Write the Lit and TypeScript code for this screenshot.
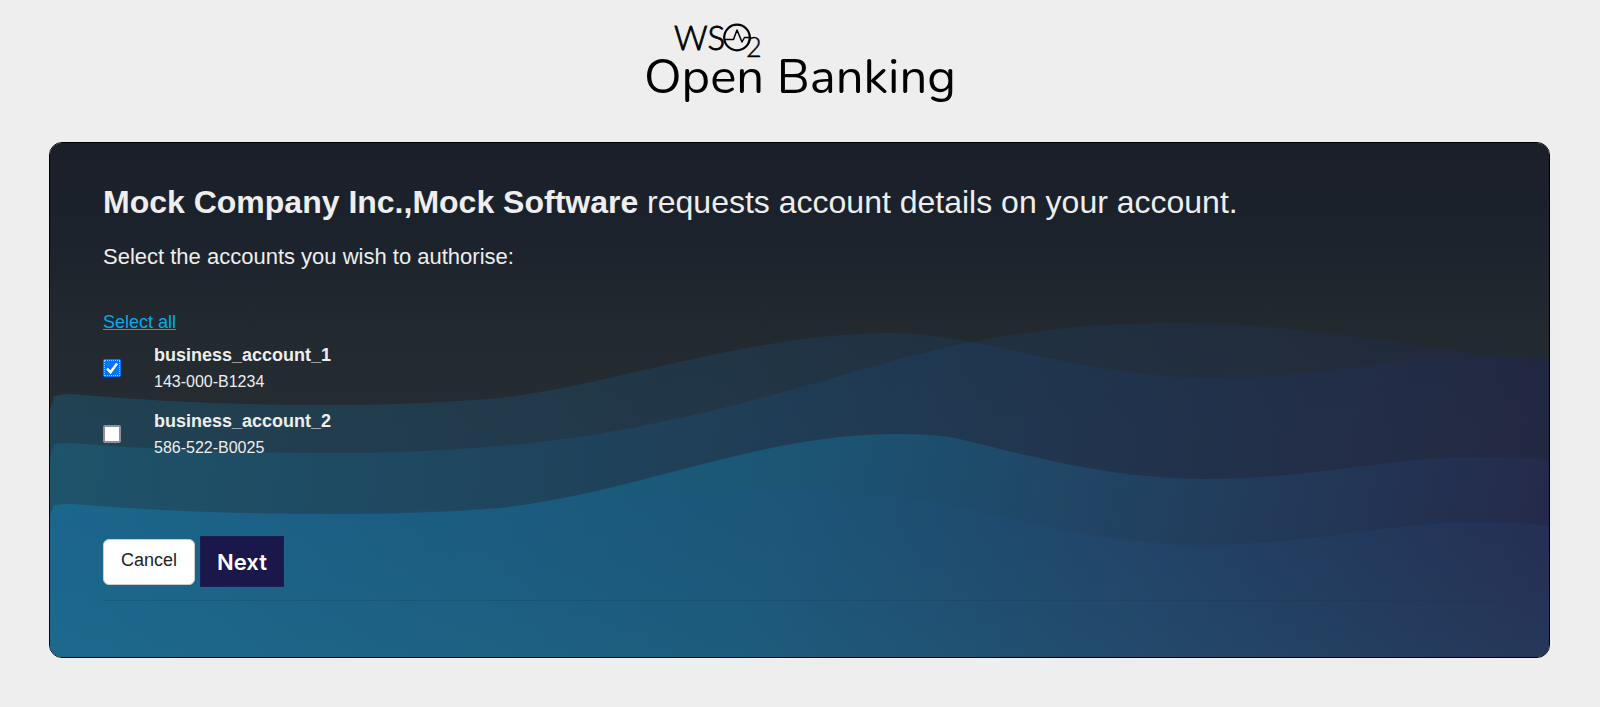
import { LitElement, html, css, svg } from "lit";
import { customElement, state } from "lit/decorators.js";

interface Account {
  id: string;
  name: string;
  selected: boolean;
}

@customElement("brand-logo")
class BrandLogo extends LitElement {
  static styles = css`
    :host {
      display: block;
    }
    .logo {
      display: block;
      margin: 0 auto;
    }
    .word {
      fill: #000;
    }
    .name {
      font-family: Lato, sans-serif;
      font-weight: 300;
      font-size: 33px;
      stroke: #000;
      stroke-width: 0.8px;
    }
    .sub {
      font-family: Lato, sans-serif;
      font-weight: 300;
      font-size: 27px;
      stroke: #000;
      stroke-width: 0.4px;
    }
    .product {
      font-family: Nunito, Lato, sans-serif;
      font-size: 49px;
    }
  `;

  render() {
    return html`
      <svg class="logo" width="320" height="100" viewBox="640 10 320 100" role="img" aria-label="WSO2 Open Banking">
        <text class="word name" x="674" y="50">WS</text>
        <circle cx="737" cy="37.5" r="12.8" fill="none" stroke="#000" stroke-width="2.2" />
        <path d="M725 39.500h8.500L737 30l5 12 2.500-4.500h6" fill="none" stroke="#000" stroke-width="1.500" stroke-linejoin="round" />
        <text class="word sub" x="746" y="57">2</text>
        <text class="word product" x="644" y="93">Open Banking</text>
      </svg>
    `;
  }
}

@customElement("wave-backdrop")
class WaveBackdrop extends LitElement {
  static styles = css`
    :host {
      display: block;
    }
    .waves {
      display: block;
      width: 100%;
      height: 100%;
    }
  `;

  render() {
    return html`
      <svg class="waves" viewBox="50 143 1499 514" preserveAspectRatio="none" aria-hidden="true">
        ${svg`
        <defs>
          <linearGradient id="base" x1="0" y1="0" x2="0" y2="1">
            <stop offset="0" stop-color="#1b1f29" />
            <stop offset="0.2" stop-color="#1c232c" />
            <stop offset="0.36" stop-color="#22292f" />
            <stop offset="0.55" stop-color="#252c33" />
          </linearGradient>
          <linearGradient id="far" gradientUnits="userSpaceOnUse" x1="50" y1="400" x2="1549" y2="600">
            <stop offset="0" stop-color="#1487b4" />
            <stop offset="0.5" stop-color="#1a5080" />
            <stop offset="1" stop-color="#222254" />
          </linearGradient>
          <linearGradient id="near" gradientUnits="userSpaceOnUse" x1="50" y1="350" x2="1500" y2="720">
            <stop offset="0" stop-color="#1687c0" />
            <stop offset="0.5" stop-color="#147ea8" />
            <stop offset="0.75" stop-color="#225680" />
            <stop offset="1" stop-color="#262c58" />
          </linearGradient>
          <linearGradient id="floor" gradientUnits="userSpaceOnUse" x1="0" y1="480" x2="0" y2="657">
            <stop offset="0" stop-color="#1f5090" stop-opacity="0.1" />
            <stop offset="1" stop-color="#2878a0" stop-opacity="0.18" />
          </linearGradient>
        </defs>
        <rect x="50" y="143" width="1499" height="514" fill="url(#base)" />
        <path fill="url(#far)" fill-opacity="0.25" d="M50 410L54 396Q62 394 72 394Q190 405 330 405C400 405 450 402 500 398C610 386 750 333 892 333C980 333 1080 378 1215 378C1325 378 1390 356 1490 356Q1520 356 1549 359V657H50Z" />
        <path fill="url(#far)" fill-opacity="0.25" d="M50 458L54 444Q62 443 72 443Q190 453 330 453C400 453 450 450 500 446C700 430 860 363 972 342C1040 329 1100 323 1165 323C1310 323 1400 346 1490 354Q1520 356 1549 359V657H50Z" />
        <path fill="url(#near)" fill-opacity="0.38" d="M50 515L54 505Q62 504 72 504Q190 514 330 514C400 514 450 512 500 508C640 492 760 434 895 434C920 434 940 435 955 438C1030 456 1110 479 1205 479C1310 479 1390 457 1480 457Q1520 457 1549 460V657H50Z" />
        <path fill="url(#floor)" d="M50 515Q300 516 500 508C600 496 700 490 800 490C960 490 1050 545 1205 545C1310 545 1390 522 1480 522Q1520 522 1549 526V657H50Z" />
        `}
      </svg>
    `;
  }
}

@customElement("app-root")
class AppRoot extends LitElement {
  @state() private accounts: Account[] = [
    { id: "143-000-B1234", name: "business_account_1", selected: true },
    { id: "586-522-B0025", name: "business_account_2", selected: false },
  ];

  static styles = css`
    :host {
      display: block;
      min-height: 100vh;
      box-sizing: border-box;
      padding: 10px 50px 48px 49px;
      background: #eeeeee;
      font-family: "Liberation Sans", Arial, sans-serif;
      color: #eeeeee;
    }
    .card {
      display: grid;
      margin-top: 32px;
      border: 1px solid #000;
      border-radius: 13px;
      overflow: hidden;
    }
    .backdrop,
    .content {
      grid-area: 1 / 1;
      min-width: 0;
    }
    .backdrop {
      height: 0;
      min-height: 100%;
    }
    .content {
      z-index: 1;
      padding: 39px 53px 56px;
    }
    .title {
      margin: 0;
      font-size: 32px;
      line-height: 40px;
      font-weight: 400;
    }
    .party {
      font-weight: 700;
    }
    .prompt {
      margin: 21px 0 39px;
      font-size: 22px;
      line-height: 28px;
    }
    .select-all {
      display: inline-block;
      font-size: 18px;
      line-height: 24px;
      color: #03a9f4;
      text-decoration: underline;
    }
    .accounts {
      display: grid;
      gap: 12px;
      justify-content: start;
      margin: 7px 0 75px;
      padding: 0;
      list-style: none;
    }
    .account {
      display: flex;
      align-items: center;
      gap: 33px;
    }
    .tick {
      display: grid;
      width: 18px;
      height: 18px;
    }
    .box,
    .check {
      grid-area: 1 / 1;
      width: 18px;
      height: 18px;
      box-sizing: border-box;
    }
    .box {
      appearance: none;
      margin: 0;
      border: 2px solid #8f8f9d;
      border-radius: 2px;
      background: #fff;
    }
    .box:checked {
      border: 0;
      background: #0075ff;
      outline: 1px dotted #9cc8ff;
      outline-offset: -2px;
    }
    .check {
      display: none;
      pointer-events: none;
    }
    .box:checked + .check {
      display: block;
    }
    .name,
    .number {
      display: block;
    }
    .name {
      font-size: 18px;
      line-height: 28px;
      font-weight: 700;
    }
    .number {
      font-size: 16px;
      line-height: 26px;
    }
    .actions {
      display: flex;
      align-items: center;
      gap: 5px;
    }
    .cancel {
      height: 46px;
      padding: 0 17px 2px;
      border: 1px solid #ccc;
      border-radius: 6px;
      background: #fff;
      color: #222;
      font-family: inherit;
      font-size: 18px;
    }
    .next {
      height: 51px;
      padding: 0 16px;
      border: 1px solid #1a1f55;
      background: #1a174b;
      color: #fff;
      font-family: Inter, "Liberation Sans", sans-serif;
      font-size: 22px;
      font-weight: 600;
    }
    .rule {
      margin: 13px 0 0;
      border: 0;
      border-top: 1px solid rgba(20, 50, 70, 0.2);
    }
  `;

  private toggle(id: string) {
    this.accounts = this.accounts.map((a) => (a.id === id ? { ...a, selected: !a.selected } : a));
  }

  private selectAll(event: Event) {
    event.preventDefault();
    this.accounts = this.accounts.map((a) => ({ ...a, selected: true }));
  }

  render() {
    return html`
      <header><brand-logo></brand-logo></header>
      <main class="card">
        <wave-backdrop class="backdrop"></wave-backdrop>
        <form class="content" @submit=${(e: Event) => e.preventDefault()}>
          <h1 class="title"><strong class="party">Mock Company Inc.,Mock Software</strong> requests account details on your account.</h1>
          <p class="prompt">Select the accounts you wish to authorise:</p>
          <a class="select-all" href="#" @click=${this.selectAll}>Select all</a>
          <ul class="accounts">
            ${this.accounts.map(
              (a) => html`
                <li>
                  <label class="account" for=${a.id}>
                    <span class="tick">
                      <input class="box" type="checkbox" id=${a.id} .checked=${a.selected} @change=${() => this.toggle(a.id)} />
                      <svg class="check" viewBox="0 0 18 18" aria-hidden="true">
                        <path d="M4 9.500l3.500 3.700L14 4.500" fill="none" stroke="#fff" stroke-width="2.500" />
                      </svg>
                    </span>
                    <span>
                      <span class="name">${a.name}</span>
                      <span class="number">${a.id}</span>
                    </span>
                  </label>
                </li>
              `
            )}
          </ul>
          <div class="actions">
            <button class="cancel" type="button">Cancel</button>
            <button class="next" type="submit">Next</button>
          </div>
          <hr class="rule" />
        </form>
      </main>
    `;
  }
}
